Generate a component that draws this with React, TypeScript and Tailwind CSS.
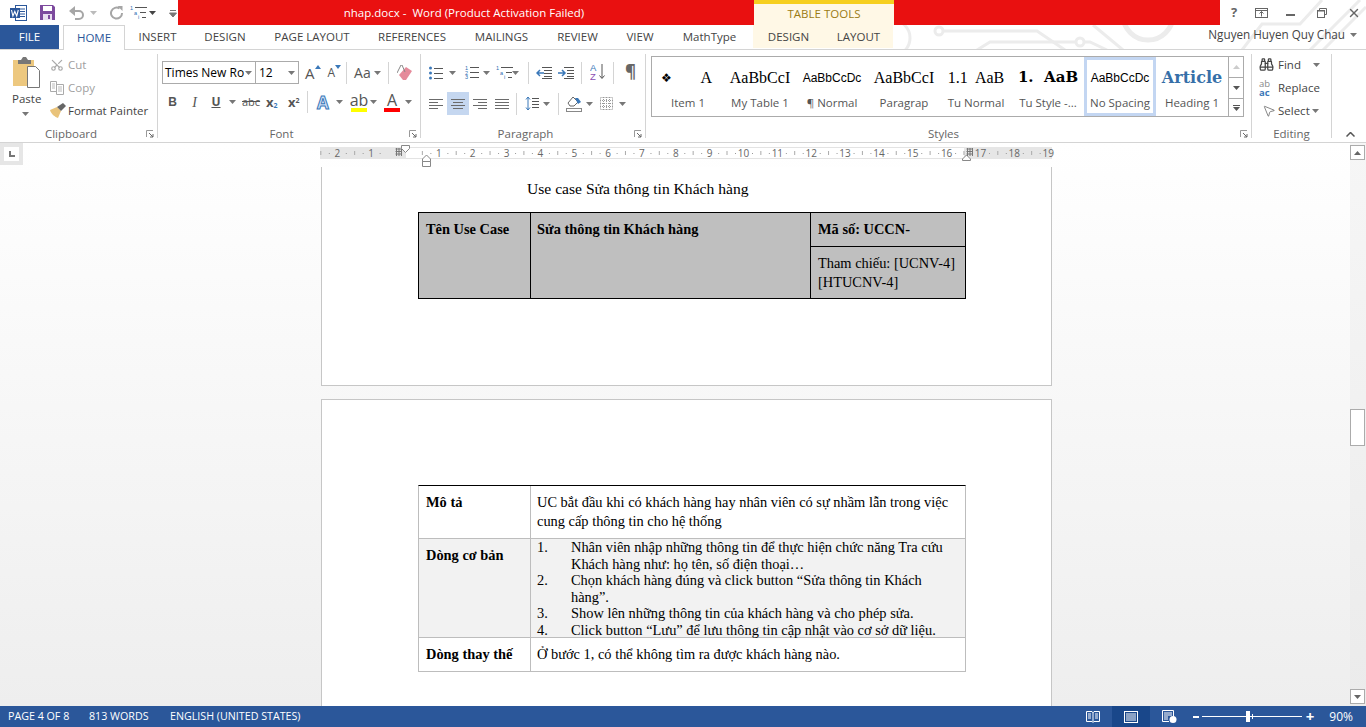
import React from "react";
import { Binoculars, MousePointer2, Scissors, X } from "lucide-react";

// small helpers for ribbon glyphs
const Caret = ({ className = "", color = "#777" }: { className?: string; color?: string }) => (
  <svg width="7" height="4" viewBox="0 0 7 4" className={`shrink-0 ${className}`}>
    <path d="M0 0h7L3.5 4z" fill={color} />
  </svg>
);

const VSep = ({ className = "" }: { className?: string }) => <span className={`w-px h-[22px] bg-[#d4d4d4] shrink-0 ${className}`} />;

const Lines = ({ rows, color = "#6b6b6b", w = 14 }: { rows: number[][]; color?: string; w?: number }) => (
  <svg width={w} height={rows.length * 3} viewBox={`0 0 ${w} ${rows.length * 3}`} className="shrink-0">
    {rows.map((r, i) => (
      <rect key={i} x={r[0]} y={i * 3 + 1} width={r[1] - r[0]} height="1" fill={color} />
    ))}
  </svg>
);

const Launcher = () => (
  <svg width="8" height="8" viewBox="0 0 8 8" className="shrink-0 mr-[3px]">
    <path d="M0.5 7V0.5H7" fill="none" stroke="#999" />
    <path d="M3 3l4 4M7 4v3H4" fill="none" stroke="#666" />
  </svg>
);

const GroupLabel = ({ children }: { children: React.ReactNode }) => (
  <div className="mt-auto -mb-[4px] h-4 flex items-center">
    <span className="flex-1 text-center pr-1 text-[11.5px] text-[#666]">{children}</span>
    <Launcher />
  </div>
);

const WordLogo = () => (
  <svg width="17" height="16" viewBox="0 0 17 16">
    <rect x="5.5" y="0.5" width="11" height="15" fill="#fff" stroke="#2b579a" />
    <path d="M10 4h5M10 6.5h5M10 9h5M10 11.5h5" stroke="#2b579a" />
    <rect x="0" y="3" width="10" height="10" fill="#2b579a" />
    <path d="M1.5 5l1.4 6 1.9-4.5L6.7 11l1.6-6" fill="none" stroke="#fff" strokeWidth="1.1" />
  </svg>
);

const SaveIcon = () => (
  <svg width="15" height="15" viewBox="0 0 15 15">
    <path d="M0 0h13l2 2v13H0z" fill="#7d4a9e" />
    <rect x="3" y="1" width="9" height="5" fill="#fff" />
    <rect x="3" y="9" width="9" height="6" fill="#e9def0" />
    <rect x="8" y="10" width="2" height="4" fill="#7d4a9e" />
  </svg>
);

const NumberedSmall = ({ multi = false }: { multi?: boolean }) => (
  <svg width="17" height="15" viewBox="0 0 17 15" className="shrink-0">
    <g fontSize="5.5" fontFamily="Liberation Sans" fill="#2b6cb0">
      <text x={multi ? 0 : 1} y="4.5">1</text>
      <text x={multi ? 4 : 1} y="9.5">{multi ? "a" : "2"}</text>
      <text x={multi ? 8 : 1} y="14">{multi ? "i" : "3"}</text>
    </g>
    {multi ? (
      <path d="M5 2.5h12M10 7.5h6M12 12.5h4" stroke="#555" />
    ) : (
      <path d="M6 2.5h9M6 7.5h9M6 12.5h9" stroke="#555" />
    )}
  </svg>
);

const TitleBar = () => (
  <div className="flex h-[25px]">
    <div className="w-[178px] flex items-center">
      <span className="ml-[10px] flex"><WordLogo /></span>
      <span className="ml-[13px] flex"><SaveIcon /></span>
      <svg width="16" height="14" viewBox="0 0 16 14" className="ml-[14px]">
        <path d="M2 5h8a4 4 0 0 1 0 8H6" fill="none" stroke="#a6a6a6" strokeWidth="2" />
        <path d="M6 0v10L0 5z" fill="#a6a6a6" />
      </svg>
      <Caret className="ml-[5px]" color="#bbb" />
      <svg width="15" height="14" viewBox="0 0 15 14" className="ml-[12px]">
        <path d="M10.5 2.5A5.5 5.5 0 1 0 13 7" fill="none" stroke="#a6a6a6" strokeWidth="2" />
        <path d="M8.5 0h5v5z" fill="#a6a6a6" />
      </svg>
      <span className="ml-[6px] flex"><NumberedSmall multi /></span>
      <Caret className="ml-[2px]" color="#444" />
      <svg width="8" height="8" viewBox="0 0 8 8" className="ml-[13px]">
        <path d="M1 1.5h6M0.5 4h7L4 8z" stroke="#777" strokeWidth="1" fill="#777" />
      </svg>
    </div>
    <div className="w-[576px] h-[24.5px] bg-[#e91010] flex items-center justify-center pr-[4px] text-white text-[11.5px]">
      <span className="whitespace-pre">nhap.docx -  Word (Product Activation Failed)</span>
    </div>
    <div className="w-[140px] bg-[#fff8e6] border-t-4 border-[#f6cf1f] flex items-center justify-center text-[#9a7b14] text-[11.5px] pb-[1px]">
      TABLE TOOLS
    </div>
    <div className="w-[326px] h-[24.5px] bg-[#e91010]" />
    <div className="flex-1 flex items-center text-[#666]">
      <span className="ml-[11px] font-bold text-[13px] leading-none">?</span>
      <svg width="13" height="10" viewBox="0 0 13 10" className="ml-[18px]">
        <rect x="0.5" y="0.5" width="12" height="9" fill="none" stroke="#666" />
        <path d="M0 2.5h13" stroke="#666" />
        <path d="M6.5 3.5v5M4.5 5.5l2-2 2 2" fill="none" stroke="#666" />
      </svg>
      <span className="ml-[18px] w-[9px] h-[2px] bg-[#666] mt-[4px]" />
      <svg width="10" height="10" viewBox="0 0 10 10" className="ml-[22px]">
        <path d="M2.5 2V0.5h7v6H8" fill="none" stroke="#666" />
        <rect x="0.5" y="2.5" width="7" height="7" fill="none" stroke="#666" />
        <path d="M0 3h8" stroke="#666" />
      </svg>
      <X size={14} strokeWidth={2.5} className="ml-[20px] text-[#666]" />
    </div>
  </div>
);

const tabs: [string, string][] = [
  ["INSERT", "w-[65px]"],
  ["DESIGN", "w-[70px]"],
  ["PAGE LAYOUT", "w-[104px]"],
  ["REFERENCES", "w-[96px]"],
  ["MAILINGS", "w-[83px]"],
  ["REVIEW", "w-[69px]"],
  ["VIEW", "w-[56px]"],
  ["MathType", "w-[83px]"],
];

const TabRow = () => (
  <div className="flex h-[25px] border-b border-[#d4d4d4] text-[11.5px] text-[#444]">
    <div className="w-[59px] bg-[#2b579a] text-white flex items-center justify-center">FILE</div>
    <div className="ml-[4px] w-[62px] h-[25px] bg-white border-x border-t border-[#d4d4d4] text-[#2b579a] flex items-center justify-center">HOME</div>
    {tabs.map(([t, w]) => (
      <div key={t} className={`${w} flex items-center justify-center`}>{t}</div>
    ))}
    <div className="ml-[2px] w-[140px] h-[23px] bg-[#fff8e6] flex items-center">
      <span className="w-[71px] text-center">DESIGN</span>
      <span className="w-[69px] text-center">LAYOUT</span>
    </div>
    <div className="flex-1 flex items-start justify-end pr-[9px] pt-[1px] text-[11.7px]">
      <span>Nguyen Huyen Quy Chau</span>
      <Caret className="ml-[5px] mt-[7px]" />
    </div>
  </div>
);

const PaintBrush = () => (
  <svg width="16" height="15" viewBox="0 0 16 15" className="shrink-0">
    <path d="M0 7l7-3 4 4-3 7C5 14 1 11 0 7z" fill="#e9c37a" />
    <path d="M7 4l4 4 5-5-3-3z" fill="#666" />
  </svg>
);

const ClipboardGroup = () => (
  <div className="w-[158px] h-[84px] mt-1 border-r border-[#d4d4d4] flex flex-col">
    <div className="flex">
      <div className="w-[50px] pl-[13px] pt-[3px] flex flex-col text-[11.5px] text-[#444]">
        <svg width="29" height="31" viewBox="0 0 29 31">
          <rect x="0" y="3" width="21" height="26" fill="#edc87f" />
          <path d="M5 3h3l2-3h3l2 3h3v4H5z" fill="#777" />
          <path d="M14.5 9.5h8l4 4v17h-12z" fill="#fff" stroke="#777" />
        </svg>
        <span className="-ml-[1px] mt-[3px] leading-[16px]">Paste</span>
        <Caret className="ml-[9px] mt-[5px]" />
      </div>
      <div className="flex flex-col text-[11.5px] leading-[23px] -mt-[1px]">
        <div className="flex items-center h-[23px] text-[#a0a0a0]">
          <Scissors size={14} className="text-[#a8a8a8] -rotate-90" />
          <span className="ml-[4px]">Cut</span>
        </div>
        <div className="flex items-center h-[23px] text-[#a0a0a0]">
          <svg width="14" height="14" viewBox="0 0 14 14">
            <path d="M0.5 0.5h6v10h-6z M6.5 3.5h7v10h-7z" fill="#fff" stroke="#aaa" />
            <path d="M8 6h4M8 8h4M8 10h4M2 3h3M2 5h3M2 7h3" stroke="#bbb" />
          </svg>
          <span className="ml-[4px]">Copy</span>
        </div>
        <div className="flex items-center h-[23px] text-[#444]">
          <PaintBrush />
          <span className="ml-[2px]">Format Painter</span>
        </div>
      </div>
    </div>
    <GroupLabel>Clipboard</GroupLabel>
  </div>
);

const SizeA = ({ up, size }: { up: boolean; size: string }) => (
  <span className="flex items-start shrink-0">
    <span className={`${size} text-[#555] leading-[20px]`}>A</span>
    <svg width="6" height="4" viewBox="0 0 6 4" className="mt-[2px]">
      <path d={up ? "M0 4h6L3 0z" : "M0 0h6L3 4z"} fill="#3a78b9" />
    </svg>
  </span>
);

const ColorA = ({ bar, text }: { bar: string; text: string }) => (
  <span className="w-[16px] flex flex-col items-center shrink-0">
    <span className="text-[16px] leading-[15px] text-[#555]">{text}</span>
    <span className={`w-[16px] h-[4px] ${bar}`} />
  </span>
);

const FontGroup = () => (
  <div className="w-[263px] h-[84px] mt-1 border-r border-[#d4d4d4] flex flex-col">
    <div className="flex items-center mt-[7px] pl-1 h-[23px]">
      <div className="w-[94px] h-[23px] border border-[#ababab] flex items-center pl-[2px] text-[12px] text-black">
        <span className="whitespace-nowrap">Times New Ro</span>
        <Caret className="ml-auto mr-[3px]" />
      </div>
      <div className="w-[43px] h-[23px] border border-l-0 border-[#ababab] flex items-center pl-[3px] text-[12px] text-black">
        <span>12</span>
        <Caret className="ml-auto mr-[3px]" />
      </div>
      <span className="ml-[6px] flex"><SizeA up size="text-[15px]" /></span>
      <span className="ml-[7px] flex"><SizeA up={false} size="text-[12px]" /></span>
      <VSep className="ml-[5px]" />
      <span className="ml-[7px] text-[14px] text-[#555]">Aa</span>
      <Caret className="ml-[3px]" />
      <VSep className="ml-[7px]" />
      <svg width="16" height="16" viewBox="0 0 16 16" className="ml-[8px]">
        <path d="M2 10l7-8 6 4-6 9H6z" fill="#e58a9a" />
        <path d="M0 8l4-8h1l3 7" fill="none" stroke="#888" />
      </svg>
    </div>
    <div className="flex items-center mt-[7px] h-[22px] text-[#555]">
      <span className="w-[11px] ml-[9px] text-center font-['Liberation_Sans',sans-serif] font-bold text-[12px]">B</span>
      <span className="w-[11px] ml-[11px] text-center font-['Liberation_Serif',serif] italic text-[14px]">I</span>
      <span className="w-[12px] ml-[10px] text-center font-bold text-[12px] underline">U</span>
      <Caret className="ml-[7px]" />
      <span className="ml-[6px] w-[17px] text-[11px] line-through">abc</span>
      <span className="ml-[7px] w-[13px] text-[13px] font-bold leading-none">x<sub className="text-[7px] text-[#3a78b9]">2</sub></span>
      <span className="ml-[9px] w-[13px] text-[13px] font-bold leading-none">x<sup className="text-[7px]">2</sup></span>
      <VSep className="ml-[6px]" />
      <span className="ml-[9px] w-[15px] text-[17px] font-bold leading-none text-[#cfe2f7] [-webkit-text-stroke:1px_#3a78b9]">A</span>
      <Caret className="ml-[4px]" />
      <span className="ml-[8px] flex"><ColorA bar="bg-[#ffff00]" text="ab" /></span>
      <Caret className="ml-[3px]" />
      <span className="ml-[7px] flex"><ColorA bar="bg-[#ff0000]" text="A" /></span>
      <Caret className="ml-[5px]" />
    </div>
    <GroupLabel>Font</GroupLabel>
  </div>
);

const left = [[0, 14], [0, 9], [0, 14], [0, 9]];
const center = [[0, 14], [2, 12], [0, 14], [2, 12]];
const right = [[0, 14], [5, 14], [0, 14], [5, 14]];
const justify = [[0, 14], [0, 14], [0, 14], [0, 14]];

const ParagraphGroup = () => (
  <div className="w-[225px] h-[84px] mt-1 border-r border-[#d4d4d4] flex flex-col">
    <div className="flex items-center mt-[7px] h-[23px]">
      <svg width="14" height="14" viewBox="0 0 14 14" className="ml-[8px]">
        <circle cx="1.5" cy="2" r="1.5" fill="#3a78b9" />
        <circle cx="1.5" cy="7" r="1.5" fill="#3a78b9" />
        <circle cx="1.5" cy="12" r="1.5" fill="#3a78b9" />
        <path d="M5 2.5h9M5 7.5h9M5 12.5h9" stroke="#555" />
      </svg>
      <Caret className="ml-[6px]" />
      <span className="ml-[8px] flex"><NumberedSmall /></span>
      <Caret className="ml-[2px]" />
      <span className="ml-[6px] flex"><NumberedSmall multi /></span>
      <Caret className="-ml-[1px]" />
      <VSep className="ml-[9px]" />
      <svg width="16" height="12" viewBox="0 0 16 12" className="ml-[7px]">
        <path d="M6 0.5h10M8 3.5h8M8 6.5h8M8 9.5h8M6 11.5h10" stroke="#555" />
        <path d="M8 6H2M4 3L1 6l3 3" fill="none" stroke="#3a78b9" strokeWidth="1.5" />
      </svg>
      <svg width="16" height="12" viewBox="0 0 16 12" className="ml-[6px]">
        <path d="M6 0.5h10M9 3.5h7M9 6.5h7M9 9.5h7M6 11.5h10" stroke="#555" />
        <path d="M0 6h6M4 3l3 3-3 3" fill="none" stroke="#3a78b9" strokeWidth="1.5" />
      </svg>
      <VSep className="ml-[7px]" />
      <svg width="16" height="19" viewBox="0 0 16 19" className="ml-[8px]">
        <text x="0" y="8" fontSize="9.5" fontFamily="Liberation Sans" fill="#3a78b9">A</text>
        <text x="0" y="16.5" fontSize="9.5" fontFamily="Liberation Sans" fill="#8b4fb3">Z</text>
        <path d="M12 1v14M9.5 12.5L12 15.5l2.5-3" fill="none" stroke="#555" />
      </svg>
      <VSep className="ml-[7px]" />
      <span className="ml-[11px] -mt-[2px] text-[17px] leading-none text-[#666] font-bold">¶</span>
    </div>
    <div className="flex items-center mt-[8px] h-[23px]">
      <span className="ml-[8px] flex"><Lines rows={left} /></span>
      <span className="ml-[4px] w-[22px] h-[23px] bg-[#c5d7f0] flex items-center justify-center"><Lines rows={center} /></span>
      <span className="ml-[4px] flex"><Lines rows={right} /></span>
      <span className="ml-[8px] flex"><Lines rows={justify} /></span>
      <VSep className="ml-[7px]" />
      <svg width="14" height="15" viewBox="0 0 14 15" className="ml-[8px]">
        <path d="M3 1v13M1 3.5L3 1l2 2.5M1 11.5L3 14l2-2.5" fill="none" stroke="#3a78b9" />
        <path d="M7 2.5h7M7 5.5h7M7 8.5h7M7 11.5h7" stroke="#555" />
      </svg>
      <Caret className="ml-[4px]" />
      <VSep className="ml-[8px]" />
      <svg width="16" height="17" viewBox="0 0 16 17" className="ml-[7px]">
        <path d="M2 8l5-6 5 5-4 4H4z" fill="#fff" stroke="#666" />
        <path d="M9 3h3l3 4-3 2z" fill="#3a78b9" />
        <rect x="0.5" y="13.5" width="15" height="3" fill="#fff" stroke="#888" />
      </svg>
      <Caret className="ml-[4px]" />
      <svg width="13" height="13" viewBox="0 0 13 13" className="ml-[7px]">
        <path d="M0.5 0.5h12v12h-12z M6.5 0v13M0 6.5h13M3.5 0v13M9.5 0v13M0 3.5h13M0 9.5h13" fill="none" stroke="#999" strokeDasharray="1 1" />
      </svg>
      <Caret className="ml-[6px]" />
    </div>
    <GroupLabel>Paragraph</GroupLabel>
  </div>
);

const styleCells: [React.ReactNode, string][] = [
  [
    <span key="a" className="w-full flex items-center justify-between pl-[6px] pr-[9px] font-['Liberation_Serif',serif] text-[16px] text-black">
      <span className="font-['DejaVu_Sans',sans-serif] text-[12px] leading-none">❖</span>
      <span>A</span>
    </span>,
    "Item 1",
  ],
  [<span key="b" className="font-['Liberation_Serif',serif] text-[16px] text-black whitespace-nowrap">AaBbCcI</span>, "My Table 1"],
  [<span key="c" className="font-['Liberation_Sans',sans-serif] text-[12px] text-black whitespace-nowrap">AaBbCcDc</span>, "¶ Normal"],
  [<span key="d" className="font-['Liberation_Serif',serif] text-[16px] text-black whitespace-nowrap">AaBbCcI</span>, "Paragrap"],
  [<span key="e" className="font-['Liberation_Serif',serif] text-[16px] text-black whitespace-pre">1.1  AaB</span>, "Tu Normal"],
  [<span key="f" className="font-['DejaVu_Serif',serif] font-bold text-[15px] text-black whitespace-pre">1.  AaB</span>, "Tu Style -..."],
  [<span key="g" className="font-['Liberation_Sans',sans-serif] text-[12px] text-black whitespace-nowrap">AaBbCcDc</span>, "No Spacing"],
  [<span key="h" className="font-['DejaVu_Serif',serif] font-bold text-[16px] text-[#366fa8] whitespace-nowrap">Article</span>, "Heading 1"],
];

const StylesGroup = () => (
  <div className="w-[606px] h-[84px] mt-1 border-r border-[#d4d4d4] flex flex-col pl-[5px]">
    <div className="flex w-[593px] h-[61px] mt-[2px] border border-[#ababab]">
      {styleCells.map(([preview, name]) => (
        <div
          key={name}
          className={`w-[72px] h-[59px] flex flex-col items-center shrink-0 overflow-hidden ${name === "No Spacing" ? "border-[3px] border-[#c3d6f2]" : "border-[3px] border-transparent"}`}
        >
          <div className="h-[35px] w-full flex items-center justify-center overflow-hidden">{preview}</div>
          <span className="text-[11.5px] leading-[16px] text-[#555] whitespace-nowrap">{name}</span>
        </div>
      ))}
      <div className="border-l border-[#ababab] flex flex-col flex-1">
        <div className="h-[21px] flex items-center justify-center border-b border-[#ababab]"><Caret className="rotate-180" color="#ccc" /></div>
        <div className="h-[21px] flex items-center justify-center border-b border-[#ababab]"><Caret color="#555" /></div>
        <div className="flex-1 flex flex-col items-center justify-center gap-px">
          <span className="w-[7px] h-px bg-[#555]" />
          <Caret color="#555" />
        </div>
      </div>
    </div>
    <GroupLabel>Styles</GroupLabel>
  </div>
);

const EditingGroup = () => (
  <div className="w-[80px] h-[84px] mt-1 border-r border-[#d4d4d4] flex flex-col text-[11.5px] text-[#444]">
    <div className="flex items-center h-[23px] -mt-[1px] pl-[7px]">
      <Binoculars size={15} className="text-[#444]" />
      <span className="ml-[4px]">Find</span>
      <Caret className="ml-[12px]" />
    </div>
    <div className="flex items-center h-[23px] pl-[7px]">
      <span className="w-[16px] text-[9.5px] leading-[9px] font-bold text-[#3a78b9]"><span className="text-[#888] font-normal">ab</span><br />ac</span>
      <span className="ml-[3px]">Replace</span>
    </div>
    <div className="flex items-center h-[23px] pl-[10px]">
      <MousePointer2 size={14} strokeWidth={1.2} className="text-[#555]" />
      <span className="ml-[2px]">Select</span>
      <Caret className="ml-[2px]" />
    </div>
    <div className="mt-auto -mb-[4px] h-4 flex items-center justify-center text-[11.5px] text-[#666]">Editing</div>
  </div>
);

const Ribbon = () => (
  <div className="flex h-[93px] border-b border-[#d4d4d4]">
    <ClipboardGroup />
    <FontGroup />
    <ParagraphGroup />
    <StylesGroup />
    <EditingGroup />
    <div className="flex-1 flex items-end justify-end pr-[11px] pb-[5px]">
      <svg width="9" height="5" viewBox="0 0 9 5">
        <path d="M0.5 4.5l4-4 4 4" fill="none" stroke="#555" strokeWidth="1.5" />
      </svg>
    </div>
  </div>
);

const rulerNums = [-2, -1, 1, 2, 3, 4, 5, 6, 7, 8, 9, 10, 11, 12, 13, 14, 15, 16, 17, 18, 19];

const Ruler = () => (
  <div className="flex h-[24px]">
    <div className="w-[23px] h-[22px] bg-[#e6e6e6] flex items-center justify-center shrink-0">
      <div className="w-[15px] h-[14px] bg-white flex items-center justify-center">
        <svg width="6" height="6" viewBox="0 0 6 6"><path d="M0 0h2v4h4v2H0z" fill="#777" /></svg>
      </div>
    </div>
    <svg width="736" height="24" viewBox="320 143 736 24" className="ml-[297px] shrink-0">
      <rect x="320" y="147" width="732" height="12" fill="#e6e6e6" />
      <rect x="406" y="147" width="558" height="12" fill="#fff" />
      <path d="M406 147.5h558M406 158.5h558" stroke="#e3e3e3" />
      {rulerNums.map((n) => {
        const x = 405 + Math.abs(n) * 33.85 * (n < 0 ? -1 : 1);
        return (
          <g key={n}>
            <text x={x} y="157" fontSize="10" fontFamily="Open Sans" fill="#666" textAnchor="middle">{Math.abs(n)}</text>
            <rect x={x - 17} y="151" width="1" height="4" fill="#aaa" />
            <rect x={x - 8.5} y="153" width="1" height="1" fill="#999" />
            <rect x={x + 8.5} y="153" width="1" height="1" fill="#999" />
          </g>
        );
      })}
      <path d="M395.5 149h6M395.5 151.5h6M395.5 154h6M396.5 148v8M399 148v8M401.5 148v8" stroke="#777" fill="none" />
      <path d="M401.5 145.5h8v3l-4 4-4-4z" fill="#fff" stroke="#888" />
      <path d="M422.5 159l4-4 4 4v2.5h-8zM422.5 161.5h8v5h-8z" fill="#fff" stroke="#888" />
      <path d="M962.5 159l4-4 4 4v1.5h-8z" fill="#fff" stroke="#888" />
      <path d="M966.5 149h6M966.5 151.5h6M966.5 154h6M967.5 148v8M970 148v8M972.5 148v8" stroke="#777" fill="none" />
    </svg>
  </div>
);

const Cell = ({ className = "", children }: { className?: string; children: React.ReactNode }) => (
  <div className={`px-[7px] pt-[7px] ${className}`}>{children}</div>
);

const steps: [string, React.ReactNode][] = [
  ["1.", <>Nhân viên nhập những thông tin để thực hiện chức năng Tra cứu<br />Khách hàng như: họ tên, số điện thoại…</>],
  ["2.", <>Chọn khách hàng đúng và click button “Sửa thông tin Khách<br />hàng”.</>],
  ["3.", "Show lên những thông tin của khách hàng và cho phép sửa."],
  ["4.", "Click button “Lưu” để lưu thông tin cập nhật vào cơ sở dữ liệu."],
];

const Pages = () => (
  <div className="pl-[321px] flex-1 min-h-0 flex flex-col font-['Liberation_Serif',serif] text-[14.4px] leading-[19px] text-black">
    <div className="w-[731px] h-[219px] bg-white border-x border-b border-[#c6c6c6] pl-[96px] shrink-0">
      <p className="pt-[12px] pl-[109px] whitespace-nowrap text-[15.6px]">Use case Sửa thông tin Khách hàng</p>
      <div className="mt-[14px] w-[548px] h-[87px] border border-black bg-[#bfbfbf] flex">
        <Cell className="w-[112px] border-r border-black font-bold">Tên Use Case</Cell>
        <Cell className="w-[280px] border-r border-black font-bold !pl-[6px]">Sửa thông tin Khách hàng</Cell>
        <div className="flex-1 flex flex-col">
          <Cell className="h-[34px] border-b border-black font-bold">Mã số: UCCN-</Cell>
          <Cell>Tham chiếu: [UCNV-4]<br />[HTUCNV-4]</Cell>
        </div>
      </div>
    </div>
    <div className="mt-[13px] w-[731px] flex-1 min-h-0 bg-white border-x border-t border-[#c6c6c6] pl-[96px] pt-[85px]">
      <div className="w-[548px] border-t border-black border-x border-b border-x-[#bdbdbd] border-b-[#bdbdbd]">
        <div className="flex h-[53px] border-b border-[#bdbdbd]">
          <Cell className="w-[112px] border-r border-[#bdbdbd] font-bold">Mô tả</Cell>
          <Cell className="flex-1 !pl-[6px]">UC bắt đầu khi có khách hàng hay nhân viên có sự nhầm lẫn trong việc<br />cung cấp thông tin cho hệ thống</Cell>
        </div>
        <div className="flex h-[99px] border-b border-[#bdbdbd] bg-[#f2f2f2]">
          <Cell className="w-[112px] border-r border-[#bdbdbd] font-bold">Dòng cơ bản</Cell>
          <div className="flex-1 pl-[6px] leading-[16.5px]">
            {steps.map(([n, text]) => (
              <div key={n} className="flex">
                <span className="w-[34px] shrink-0">{n}</span>
                <span className="whitespace-nowrap">{text}</span>
              </div>
            ))}
          </div>
        </div>
        <div className="flex h-[33px]">
          <Cell className="w-[112px] border-r border-[#bdbdbd] font-bold">Dòng thay thế</Cell>
          <Cell className="flex-1 !pl-[6px]">Ở bước 1, có thể không tìm ra được khách hàng nào.</Cell>
        </div>
      </div>
    </div>
  </div>
);

const ScrollBtn = ({ up }: { up?: boolean }) => (
  <div className="w-[15px] h-[15px] bg-white border border-[#ababab] flex items-center justify-center shrink-0">
    <svg width="7" height="4" viewBox="0 0 7 4"><path d={up ? "M0 4h7L3.5 0z" : "M0 0h7L3.5 4z"} fill="#666" /></svg>
  </div>
);

const Scrollbar = () => (
  <div className="w-[16px] flex flex-col bg-linear-to-b from-[#f6f6f6] to-[#ebebeb] pt-[2px] pb-[2px]">
    <ScrollBtn up />
    <div className="mt-[249px] w-[15px] h-[37px] bg-white border border-[#ababab]" />
    <div className="flex-1" />
    <ScrollBtn />
  </div>
);

const StatusBar = () => (
  <div className="h-[21px] bg-[#2b579a] flex items-center text-white text-[10.7px]">
    <span className="ml-[8px] w-[81px] whitespace-nowrap">PAGE 4 OF 8</span>
    <span className="w-[81px] whitespace-nowrap">813 WORDS</span>
    <span className="whitespace-nowrap">ENGLISH (UNITED STATES)</span>
    <svg width="14" height="12" viewBox="0 0 14 12" className="ml-auto">
      <path d="M0.5 0.5h5.5L7 1.5l1-1h5.5v10H8l-1 1-1-1H0.5z" fill="none" stroke="#fff" />
      <path d="M7 1v10M2 3h3M2 5h3M2 7h3M9 3h3M9 5h3M9 7h3" stroke="#fff" />
    </svg>
    <span className="ml-[12px] w-[38px] h-[21px] bg-[#19478a] flex items-center justify-center">
      <svg width="14" height="12" viewBox="0 0 14 12">
        <rect x="0.5" y="0.5" width="13" height="11" fill="none" stroke="#fff" />
        <path d="M2 3h10M2 5h10M2 7h10M2 9h10" stroke="#fff" />
      </svg>
    </span>
    <svg width="15" height="13" viewBox="0 0 15 13" className="ml-[12px]">
      <path d="M0.5 0.5h11v6M7 11.5H0.5v-11M2 3h8M2 5h8M2 7h4M2 9h4" stroke="#fff" fill="none" />
      <circle cx="11" cy="9.5" r="3.5" fill="#fff" />
    </svg>
    <span className="ml-[16px] w-[6px] h-[2px] bg-white" />
    <span className="ml-[3px] w-[100px] h-[11px] flex items-center">
      <span className="w-[44px] h-px bg-white" />
      <span className="w-[4px] h-[11px] bg-white" />
      <span className="w-[2px] h-px bg-white" />
      <span className="w-px h-[5px] bg-white" />
      <span className="flex-1 h-px bg-white" />
    </span>
    <span className="ml-[4px] text-[15px] font-bold leading-none">+</span>
    <span className="ml-[15px] mr-[13px] text-[12px]">90%</span>
  </div>
);

export default function App() {
  return (
    <div className="relative w-[1366px] h-[727px] flex flex-col overflow-hidden bg-white font-['Open_Sans',sans-serif]">
      {/* circuit pattern of the Office theme, behind the title bar */}
      <svg width="472" height="50" viewBox="894 0 472 50" className="absolute left-[894px] top-0" fill="none" stroke="#ececec" strokeWidth="3">
        <circle cx="892" cy="38" r="18" />
        <circle cx="939" cy="31" r="4" />
        <path d="M943 31h94l28 19" />
        <path d="M977 50l13-8h85M1084 42h6l17 8" />
        <circle cx="1080" cy="42" r="4" />
        <path d="M1093 25l30 25" />
        <circle cx="1148" cy="15" r="25" strokeWidth="5" />
        <path d="M1242 50l20-26h38l22-24M1310 50l50-50M1323 50l43-43" />
      </svg>
      <div className="relative flex flex-col">
        <TitleBar />
        <TabRow />
        <Ribbon />
      </div>
      <div className="flex-1 min-h-0 flex">
        <div className="flex-1 min-w-0 flex flex-col bg-linear-to-b from-white to-[#eeeeee]">
          <Ruler />
          <Pages />
        </div>
        <Scrollbar />
      </div>
      <StatusBar />
    </div>
  );
}
